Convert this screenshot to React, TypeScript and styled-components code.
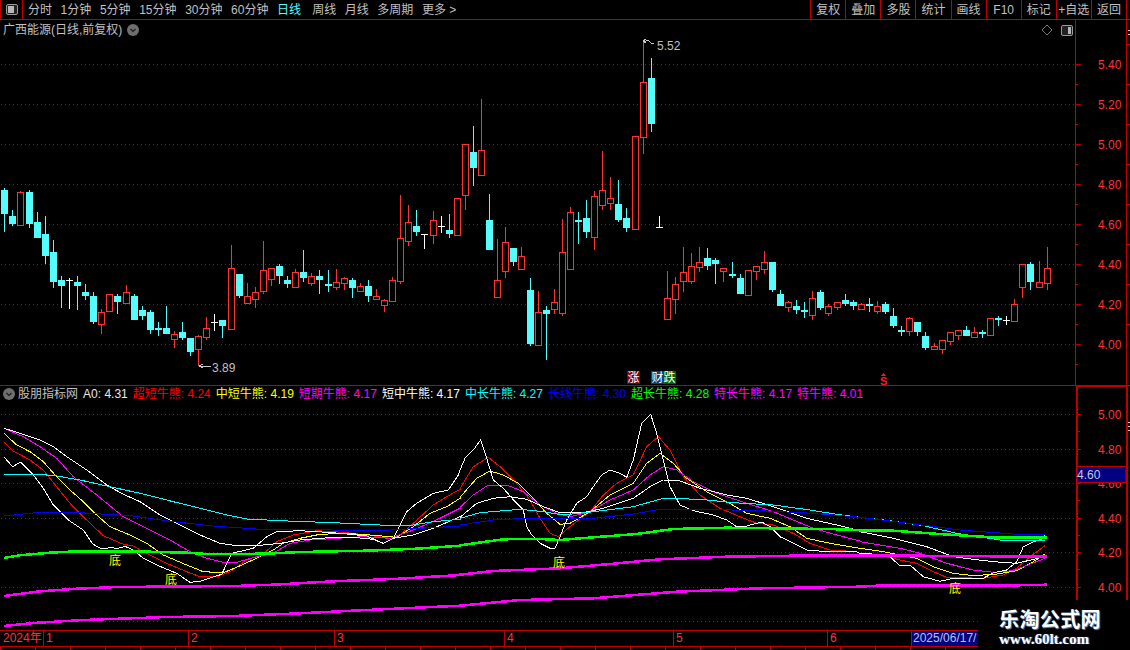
import styled, { createGlobalStyle } from 'styled-components';

const RED = '#ff3232';
const LINE = '#c00000';
const DOT = '#c00000';
const FONT = '"Liberation Sans", "Noto Sans CJK SC", sans-serif';

const TABS = ['分时', '1分钟', '5分钟', '15分钟', '30分钟', '60分钟', '日线', '周线', '月线', '多周期', '更多 >'];
const ACTIONS = ['复权', '叠加', '多股', '统计', '画线', 'F10', '标记', '+自选', '返回'];

const LEGEND = [
  { label: 'A0', value: '4.31', color: '#e8e8e8' },
  { label: '超短牛熊', value: '4.24', color: '#ff0000' },
  { label: '中短牛熊', value: '4.19', color: '#ffff00' },
  { label: '短期牛熊', value: '4.17', color: '#ff00ff' },
  { label: '短中牛熊', value: '4.17', color: '#ffffff' },
  { label: '中长牛熊', value: '4.27', color: '#00ffff' },
  { label: '长线牛熊', value: '4.30', color: '#0000ff' },
  { label: '超长牛熊', value: '4.28', color: '#00ff00' },
  { label: '特长牛熊', value: '4.17', color: '#ff00ff' },
  { label: '特牛熊', value: '4.01', color: '#ff00ff' },
];

const MONTHS = [
  { label: '2024年', width: 44 },
  { label: '1', width: 145 },
  { label: '2', width: 146 },
  { label: '3', width: 170 },
  { label: '4', width: 169 },
  { label: '5', width: 154 },
  { label: '6', width: 84 },
];

// high, body top, body bottom, low, kind (page pixels)
type Candle = [number, number, number, number, 'r' | 'c' | 'w'];
const CANDLES: Candle[] = [
  [188, 190, 214, 232, 'c'], [210, 216, 224, 226, 'c'], [191, 192, 225, 226, 'r'], [190, 192, 224, 228, 'c'],
  [212, 222, 238, 238, 'c'], [216, 234, 256, 264, 'c'], [240, 252, 282, 288, 'c'], [276, 280, 286, 308, 'c'],
  [278, 280, 280, 308, 'w'], [276, 282, 286, 310, 'c'], [284, 292, 296, 300, 'c'], [292, 296, 322, 324, 'c'],
  [309, 312, 324, 334, 'r'], [294, 294, 311, 312, 'r'], [294, 296, 302, 314, 'c'], [285, 292, 303, 303, 'r'],
  [294, 296, 320, 320, 'c'], [306, 310, 316, 320, 'c'], [310, 312, 330, 334, 'c'], [322, 328, 330, 336, 'c'],
  [306, 328, 334, 334, 'c'], [331, 334, 339, 348, 'r'], [322, 332, 338, 340, 'c'], [338, 338, 352, 356, 'c'],
  [335, 336, 349, 366, 'r'], [317, 328, 337, 340, 'r'], [314, 322, 322, 330, 'w'], [320, 320, 326, 338, 'c'],
  [245, 268, 329, 330, 'r'], [274, 274, 296, 298, 'c'], [283, 296, 303, 303, 'r'], [287, 292, 299, 308, 'r'],
  [241, 270, 291, 294, 'r'], [268, 268, 279, 286, 'r'], [264, 266, 276, 284, 'c'], [276, 280, 284, 288, 'c'],
  [269, 272, 287, 288, 'r'], [250, 272, 278, 282, 'c'], [273, 276, 283, 286, 'r'], [270, 276, 280, 294, 'c'],
  [270, 284, 286, 292, 'c'], [269, 282, 287, 290, 'r'], [277, 278, 283, 290, 'r'], [278, 280, 288, 298, 'c'],
  [283, 286, 291, 291, 'r'], [280, 286, 296, 302, 'c'], [289, 296, 299, 299, 'r'], [299, 300, 305, 312, 'r'],
  [277, 280, 301, 302, 'r'], [195, 238, 281, 284, 'r'], [205, 222, 241, 246, 'r'], [210, 226, 232, 236, 'c'],
  [234, 234, 234, 248, 'w'], [211, 220, 235, 244, 'r'], [216, 226, 226, 232, 'w'], [214, 230, 234, 238, 'c'],
  [198, 198, 235, 236, 'r'], [144, 144, 195, 210, 'r'], [126, 152, 168, 186, 'c'], [99, 150, 175, 175, 'r'],
  [194, 220, 250, 250, 'c'], [239, 280, 297, 297, 'r'], [227, 242, 271, 278, 'r'], [248, 248, 262, 266, 'c'],
  [247, 256, 269, 270, 'r'], [278, 290, 344, 346, 'c'], [291, 312, 345, 345, 'r'], [306, 310, 314, 360, 'c'],
  [289, 302, 309, 314, 'r'], [219, 252, 313, 316, 'r'], [207, 212, 269, 269, 'r'], [212, 220, 222, 244, 'c'],
  [200, 218, 232, 238, 'c'], [191, 196, 237, 250, 'r'], [151, 190, 205, 210, 'r'], [177, 198, 203, 210, 'r'],
  [180, 204, 220, 222, 'c'], [208, 218, 228, 232, 'c'], [136, 136, 229, 229, 'r'], [40, 82, 137, 154, 'r'],
  [58, 78, 124, 132, 'c'], [216, 227, 227, 227, 'w'], [271, 298, 319, 319, 'r'], [277, 284, 299, 314, 'r'],
  [247, 272, 281, 292, 'r'], [253, 266, 281, 284, 'r'], [247, 262, 267, 272, 'r'], [248, 258, 266, 270, 'c'],
  [258, 260, 264, 284, 'c'], [268, 268, 271, 282, 'r'], [262, 274, 276, 278, 'c'], [274, 278, 294, 294, 'c'],
  [270, 270, 295, 295, 'r'], [266, 266, 271, 280, 'r'], [251, 262, 269, 274, 'r'], [262, 262, 290, 292, 'c'],
  [290, 294, 306, 306, 'c'], [301, 302, 307, 312, 'r'], [300, 306, 310, 314, 'c'], [302, 310, 312, 318, 'c'],
  [291, 298, 315, 320, 'r'], [290, 292, 308, 310, 'c'], [304, 306, 313, 316, 'r'], [302, 302, 307, 310, 'r'],
  [294, 300, 304, 306, 'c'], [300, 302, 306, 310, 'c'], [303, 304, 309, 309, 'r'], [298, 304, 306, 312, 'c'],
  [301, 306, 311, 314, 'r'], [302, 304, 312, 314, 'c'], [308, 316, 326, 328, 'c'], [326, 330, 332, 336, 'c'],
  [317, 318, 331, 336, 'r'], [322, 322, 332, 336, 'c'], [332, 336, 348, 350, 'c'], [343, 346, 349, 350, 'r'],
  [340, 340, 349, 354, 'r'], [332, 332, 341, 345, 'r'], [330, 330, 335, 340, 'r'], [326, 330, 336, 336, 'c'],
  [327, 332, 337, 337, 'r'], [330, 332, 334, 338, 'c'], [318, 318, 335, 335, 'r'], [316, 318, 320, 326, 'c'],
  [316, 320, 320, 324, 'w'], [299, 304, 321, 321, 'r'], [264, 264, 287, 298, 'r'], [262, 264, 282, 290, 'c'],
  [261, 282, 287, 288, 'r'], [247, 268, 283, 290, 'r'],
];

// each trace was read in three stretches, x relative to 0, 460 and 860, scaled 3x
const stretch = (x0: number, points: string) =>
  points
    .split(' ')
    .map(p => {
      const [x, y] = p.split(',').map(Number);
      return `${(x0 + x / 3).toFixed(1)},${(380 + y / 3).toFixed(1)}`;
    })
    .join(' ');

const trace = (a: string, b: string, c: string) =>
  [stretch(0, a), stretch(460, b), stretch(860, c)].join(' ');

const TRACES = [
  {
    color: '#ff0000',
    width: 1,
    points: trace(
      '12,187 40,213 90,240 130,270 170,320 210,370 260,420 310,467 370,493 400,498 430,515 500,550 560,575 600,590 650,590 690,575 740,540 790,522 830,485 880,465 950,452 1030,457 1100,465 1170,475 1200,465 1240,430 1300,375 1340,350 1380,328',
      '0,325 40,260 85,232 120,260 170,310 210,360 240,415 270,460 295,470 330,440 390,395 430,345 470,310 520,285 560,200 595,170 630,210 670,290 720,345 780,385 840,410 890,430 940,435 1000,460 1050,490 1110,510 1190,515',
      '0,520 60,525 120,540 170,550 220,575 260,592 370,595 430,585 470,565 510,530 555,497',
    ),
  },
  {
    color: '#ffff00',
    width: 1,
    points: trace(
      '12,160 50,195 90,215 130,245 170,290 210,330 250,365 290,405 330,440 390,465 440,490 490,525 560,555 610,575 670,578 710,562 780,530 820,510 850,490 900,475 960,463 1040,460 1110,465 1190,472 1240,440 1290,400 1340,380 1380,355',
      '0,352 50,295 90,273 130,285 175,310 215,350 260,400 300,433 330,430 390,395 450,345 520,310 560,250 600,220 640,250 680,295 740,335 800,365 860,400 930,415 990,440 1040,475 1110,490 1200,505',
      '0,505 70,515 120,525 170,535 220,560 280,580 340,587 410,582 470,572 520,545 555,522',
    ),
  },
  {
    color: '#ff00ff',
    width: 1,
    points: trace(
      '12,145 70,170 120,200 170,235 220,290 290,345 370,410 430,440 510,480 570,515 620,535 670,547 710,547 770,530 820,520 870,490 930,480 1010,475 1090,470 1170,475 1240,450 1320,415 1380,385',
      '0,382 40,345 85,315 140,315 190,335 240,375 290,400 330,410 390,395 450,360 520,330 570,285 610,260 650,270 700,305 770,340 860,370 940,395 1000,420 1060,445 1130,465 1200,483',
      '0,485 60,495 120,505 180,520 260,550 340,570 400,577 460,572 555,535',
    ),
  },
  {
    color: '#ffffff',
    width: 1,
    points: trace(
      '12,145 60,160 120,180 160,200 200,230 260,270 320,315 370,343 420,365 480,405 540,435 600,465 660,490 710,497 770,497 840,490 900,480 1000,472 1060,472 1120,478 1150,490 1180,475 1240,465 1300,445 1380,410',
      '0,412 50,370 100,355 150,350 200,358 250,380 300,398 370,398 430,385 520,355 570,320 610,300 660,303 720,325 800,345 860,355 940,380 1040,415 1130,435 1190,450',
      '0,455 100,475 200,500 280,530 340,538 400,545 470,550 555,530',
    ),
  },
  {
    color: '#ffffff',
    width: 1,
    points: trace(
      '12,231 38,260 62,246 100,285 130,325 160,375 205,420 250,450 278,492 305,507 330,503 355,505 375,499 400,510 430,535 470,555 530,580 570,607 600,604 665,583 695,520 760,505 800,470 830,455 900,452 1000,458 1100,468 1150,490 1180,475 1220,395 1250,370 1300,340 1345,330 1375,285',
      '0,270 15,235 40,210 62,180 80,235 100,300 130,325 165,365 190,390 200,440 215,465 240,490 270,505 285,505 300,470 320,420 350,370 380,350 400,320 425,285 450,270 480,280 500,292 520,240 545,130 572,103 590,160 610,240 630,320 660,375 700,392 760,405 800,420 830,440 860,438 905,426 930,440 960,470 1000,490 1040,510 1100,515 1190,515',
      '0,520 85,525 120,558 150,555 190,590 240,604 280,595 370,595 400,578 440,570 470,545 490,500 520,485 545,478 555,465',
    ),
  },
  {
    color: '#00ffff',
    width: 1,
    points: trace(
      '12,284 130,284 170,288 240,300 330,320 420,340 520,365 600,385 680,405 740,417 840,422 1000,428 1140,435 1240,435 1300,425 1380,418',
      '0,415 60,398 130,392 180,388 250,395 310,405 400,395 520,380 610,355 720,358 820,368 940,375 1050,390 1130,403 1200,412',
      '0,412 90,422 190,437 290,460 420,480 490,482 555,480',
    ),
  },
  {
    color: '#0000ff',
    width: 1,
    points: trace(
      '12,408 70,402 120,397 240,398 400,408 520,425 640,438 780,448 1000,450 1140,452 1260,445 1380,438',
      '0,435 100,420 200,415 400,415 520,402 600,388 730,388 900,392 1060,400 1200,412',
      '0,412 130,428 300,450 470,463 555,464',
    ),
  },
  {
    color: '#00ff00',
    width: 2.5,
    points: trace(
      '12,534 60,526 150,518 230,514 400,514 560,518 620,522 800,521 900,516 1100,512 1250,506 1380,497',
      '0,496 130,478 240,477 300,480 400,472 530,462 640,447 800,443 1100,447 1200,450',
      '0,452 100,452 250,463 420,473 560,473',
    ),
  },
  {
    color: '#ff00ff',
    width: 2.5,
    points: trace(
      '12,648 120,634 230,626 350,621 700,618 820,614 1000,604 1200,596 1380,585',
      '0,584 100,573 300,565 450,552 600,538 800,530 1000,527 1200,527',
      '0,527 170,527 560,530',
    ),
  },
  {
    color: '#ff00ff',
    width: 2.5,
    points: trace(
      '12,738 100,729 250,720 500,711 700,708 900,700 1100,690 1380,677',
      '0,677 180,660 400,655 650,635 900,625 1200,620',
      '0,620 50,617 420,617 560,614',
    ),
  },
];

const PRICE_GRID = [5.4, 5.2, 5.0, 4.8, 4.6, 4.4, 4.2, 4.0].map(p => ({
  label: p.toFixed(2),
  y: Math.round(344 + (4 - p) * 200),
}));
const INDICATOR_GRID = [5.0, 4.8, 4.6, 4.4, 4.2, 4.0].map(p => ({
  label: p.toFixed(2),
  y: Math.round(587 - (p - 4) * 173),
}));
const BOTTOM_MARKS = [
  { x: 109, y: 561 },
  { x: 165, y: 580 },
  { x: 553, y: 563 },
  { x: 949, y: 589 },
];

function Candles() {
  return (
    <g shapeRendering='crispEdges'>
      {CANDLES.map(([high, top, bottom, low, kind], i) => {
        const x = Math.round(4.3 + 8.08 * i);
        if (kind === 'w') {
          return (
            <g key={i} fill='#fff'>
              <rect x={x} y={high} width={1} height={low - high + 1} />
              <rect x={x - 3} y={top} width={7} height={1} />
            </g>
          );
        }
        const fill = kind === 'r' ? RED : '#54fcfc';
        return (
          <g key={i} fill={fill}>
            <rect x={x} y={high} width={1} height={Math.max(top - high, 0)} />
            <rect x={x} y={bottom} width={1} height={Math.max(low - bottom, 0)} />
            {kind === 'r' ? (
              <rect
                x={x - 2.5}
                y={top + 0.5}
                width={6}
                height={bottom - top}
                fill='#000'
                stroke={RED}
                strokeWidth={1}
              />
            ) : (
              <rect x={x - 3} y={top} width={7} height={bottom - top} />
            )}
          </g>
        );
      })}
    </g>
  );
}

function GridLines({ rows, right }: { rows: { y: number }[]; right: number }) {
  return (
    <g stroke={DOT} strokeDasharray='1 3' shapeRendering='crispEdges'>
      {rows.map(row => (
        <line key={row.y} x1={1} x2={right} y1={row.y + 0.5} y2={row.y + 0.5} />
      ))}
    </g>
  );
}

function Badge({ x, bg, children }: { x: number; bg: string; children: string }) {
  return (
    <g>
      <rect x={x} y={371} width={13} height={13} fill={bg} />
      <text x={x + 0.5} y={382} fill='#fff' fontSize={12}>
        {children}
      </text>
    </g>
  );
}

function PriceChart() {
  return (
    <ChartSvg width={1075} height={365} viewBox='0 20 1075 365'>
      <GridLines rows={PRICE_GRID} right={1075} />
      <Candles />
      <path
        d='M643 41 l3 -2 M643 41 l3 2 M643 41 h3 q2 -1 4 1 t4 2'
        fill='none'
        stroke='#c8c8c8'
        shapeRendering='crispEdges'
      />
      <text x={657} y={50} fill='#c0c0c0' fontSize={12}>
        5.52
      </text>
      <path
        d='M199 366 h12 M199 366 l4 -2 M199 366 l4 2'
        fill='none'
        stroke='#c8c8c8'
        shapeRendering='crispEdges'
      />
      <text x={212} y={372} fill='#c0c0c0' fontSize={12}>
        3.89
      </text>
      <Badge x={627} bg='#800000'>
        涨
      </Badge>
      <Badge x={651} bg='#0a3f78'>
        财
      </Badge>
      <Badge x={663} bg='#006400'>
        跌
      </Badge>
      <path d='M883.5 373 L886 376 L881 376 Z' fill='#ff1a1a' />
      <text x={880} y={384.5} fill='#ff1a1a' fontSize={11} fontWeight={700}>
        S
      </text>
    </ChartSvg>
  );
}

function IndicatorChart() {
  return (
    <ChartSvg width={1076} height={244} viewBox='0 386 1076 244'>
      <GridLines rows={[...INDICATOR_GRID, { y: 621 }]} right={1076} />
      <g fill='none' shapeRendering='crispEdges'>
        {TRACES.map((line, i) => (
          <polyline key={i} points={line.points} stroke={line.color} strokeWidth={line.width} />
        ))}
      </g>
      {BOTTOM_MARKS.map(mark => (
        <text key={mark.x} x={mark.x} y={mark.y + 4} fill='#ffff00' fontSize={12}>
          底
        </text>
      ))}
    </ChartSvg>
  );
}

function PriceAxis() {
  return (
    <ChartSvg width={55} height={365} viewBox='1075 20 55 365'>
      <g stroke={LINE} shapeRendering='crispEdges'>
        <line x1={1075.5} x2={1075.5} y1={20} y2={385} />
        <line x1={1126.5} x2={1126.5} y1={20} y2={385} />
        {PRICE_GRID.map(row => (
          <g key={row.y}>
            <line x1={1075} x2={1081} y1={row.y + 0.5} y2={row.y + 0.5} />
            <line x1={1075} x2={1078} y1={row.y + 20.5} y2={row.y + 20.5} />
            <line x1={1127} x2={1130} y1={row.y - 19.5} y2={row.y - 19.5} />
          </g>
        ))}
      </g>
      <rect x={1128} y={30} width={2} height={1} fill='#c8c8c8' />
      <rect x={1128} y={34} width={2} height={1} fill='#c8c8c8' />
      {PRICE_GRID.map(row => (
        <text key={row.y} x={1098} y={row.y + 5} fill={RED} fontSize={12}>
          {row.label}
        </text>
      ))}
    </ChartSvg>
  );
}

function IndicatorAxis() {
  return (
    <ChartSvg width={54} height={244} viewBox='1076 386 54 244'>
      <g stroke={LINE} shapeRendering='crispEdges'>
        <rect x={1076} y={386} width={52} height={1} fill={LINE} stroke='none' />
        <rect x={1076} y={386} width={2} height={214} fill={LINE} stroke='none' />
        <rect x={1126} y={386} width={2} height={214} fill={LINE} stroke='none' />
        {INDICATOR_GRID.map(row => (
          <g key={row.y}>
            <line x1={1078} x2={1081} y1={row.y + 0.5} y2={row.y + 0.5} />
            <line x1={1078} x2={1080} y1={row.y + 17.5} y2={row.y + 17.5} />
          </g>
        ))}
      </g>
      <rect x={1128} y={422} width={2} height={1} fill='#c8c8c8' />
      <rect x={1128} y={426} width={2} height={1} fill='#c8c8c8' />
      <rect x={1128} y={430} width={2} height={1} fill='#c8c8c8' />
      {INDICATOR_GRID.map(row => (
        <text key={row.y} x={1098} y={row.y + 5} fill={RED} fontSize={12}>
          {row.label}
        </text>
      ))}
      <rect x={1077} y={466.5} width={49} height={16} fill='#000080' stroke={LINE} />
      <text x={1077} y={479} fill='#c8c8e0' fontSize={12}>
        4.60
      </text>
    </ChartSvg>
  );
}

function PanelChevron() {
  return (
    <svg width={12} height={12} viewBox='0 0 12 12'>
      <circle cx={6} cy={6} r={6} fill='#6e6e6e' />
      <path d='M3.5 5 L6 7.5 L8.5 5' fill='none' stroke='#1c1c1c' strokeWidth={1.2} />
    </svg>
  );
}

function LayoutIcon({ fillRight }: { fillRight?: boolean }) {
  return (
    <svg width={12} height={11} viewBox='0 0 12 11'>
      <rect x={0.5} y={0.5} width={11} height={10} rx={1.5} fill='#222' stroke='#9a9a9a' />
      <rect x={fillRight ? 7 : 2} y={2} width={fillRight ? 3 : 6} height={7} fill='#b8b8b8' />
    </svg>
  );
}

export default function App() {
  return (
    <Page>
      <GlobalStyle />
      <Toolbar>
        <IconCell>
          <LayoutIcon />
        </IconCell>
        <Tabs>
          {TABS.map(tab => (
            <Tab key={tab} $active={tab === '日线'}>
              {tab}
            </Tab>
          ))}
        </Tabs>
        <Actions>
          {ACTIONS.map(action => (
            <Action key={action}>{action}</Action>
          ))}
        </Actions>
      </Toolbar>

      <PricePanel>
        <PanelHead>
          <span>广西能源(日线,前复权)</span>
          <PanelChevron />
        </PanelHead>
        <PanelTools>
          <svg width={12} height={12} viewBox='0 0 12 12'>
            <path d='M6 1 L11 6 L6 11 L1 6 Z' fill='none' stroke='#777' />
          </svg>
          <LayoutIcon fillRight />
        </PanelTools>
        <PriceChart />
        <PriceAxis />
      </PricePanel>

      <IndicatorPanel>
        <Legend>
          <LegendName>
            <PanelChevron />
            <span>股朋指标网</span>
          </LegendName>
          {LEGEND.map(item => (
            <LegendItem key={item.label} $color={item.color}>
              {item.label}: {item.value}
            </LegendItem>
          ))}
        </Legend>
        <IndicatorChart />
        <IndicatorAxis />
      </IndicatorPanel>

      <TimeAxis>
        {MONTHS.map(month => (
          <Month key={month.label} $width={month.width}>
            {month.label}
          </Month>
        ))}
        <DateBox>2025/06/17/</DateBox>
      </TimeAxis>
      <AxisTail />

      <Watermark>
        <WatermarkTitle>乐淘公式网</WatermarkTitle>
        <WatermarkUrl>www.60lt.com</WatermarkUrl>
      </Watermark>
    </Page>
  );
}

const GlobalStyle = createGlobalStyle`
  html, body {
    margin: 0;
    background: #000;
  }
`;

const Page = styled.div`
  position: relative;
  width: 1130px;
  height: 650px;
  overflow: hidden;
  background: #000;
  color: #c0c0c0;
  font-family: ${FONT};
  font-size: 12px;
  line-height: 14px;
`;

const Toolbar = styled.div`
  display: flex;
  align-items: stretch;
  height: 19px;
  border-bottom: 1px solid ${LINE};
`;

const IconCell = styled.div`
  display: flex;
  align-items: center;
  justify-content: center;
  width: 23px;
  box-sizing: border-box;
  border-left: 1px solid ${LINE};
  border-right: 1px solid ${LINE};
`;

const Tabs = styled.div`
  display: flex;
  align-items: center;
  gap: 8.6px;
  padding-left: 5px;
`;

const Tab = styled.span<{ $active?: boolean }>`
  color: ${props => (props.$active ? '#54fcfc' : '#c0c0c0')};
  margin-right: ${props => (props.$active ? '2.5px' : '0')};
`;

const Actions = styled.div`
  display: flex;
  margin-left: auto;
  margin-right: 3px;
  border-right: 1px solid ${LINE};
`;

const Action = styled.div`
  display: flex;
  align-items: center;
  justify-content: center;
  width: 35.1px;
  box-sizing: border-box;
  border-left: 1px solid ${LINE};
`;

const ChartSvg = styled.svg`
  display: block;
  flex: none;
  font-family: ${FONT};
`;

const PricePanel = styled.div`
  position: relative;
  display: flex;
  height: 365px;
`;

const PanelHead = styled.div`
  position: absolute;
  top: 3px;
  left: 3px;
  display: flex;
  align-items: center;
  gap: 5px;
`;

const PanelTools = styled.div`
  position: absolute;
  top: 4px;
  left: 1041px;
  display: flex;
  align-items: center;
  gap: 8px;
`;

const IndicatorPanel = styled.div`
  position: relative;
  display: flex;
  height: 244px;
  border-top: 1px solid ${LINE};
`;

const Legend = styled.div`
  position: absolute;
  top: 1px;
  left: 3px;
  display: flex;
  align-items: center;
  gap: 5px;
  white-space: nowrap;
`;

const LegendName = styled.div`
  display: flex;
  align-items: center;
  gap: 3px;
`;

const LegendItem = styled.span<{ $color: string }>`
  color: ${props => props.$color};
`;

const TimeAxis = styled.div`
  display: flex;
  width: 978px;
  height: 15px;
  border-top: 1px solid ${LINE};
  border-bottom: 1px solid ${LINE};
  background: repeating-linear-gradient(90deg, ${LINE} 0 1px, transparent 1px 36.5px) 6px 0 / 100% 3px
    no-repeat;
`;

const Month = styled.div<{ $width: number }>`
  flex: none;
  width: ${props => props.$width}px;
  box-sizing: border-box;
  padding-left: 2px;
  color: ${RED};
  border-right: 1px solid ${LINE};
  white-space: nowrap;
  background: #000;
  &:first-child {
    padding-left: 3px;
  }
`;

const DateBox = styled.div`
  flex: 1;
  background: #000080;
  color: #b8c4e8;
  white-space: nowrap;
  overflow: hidden;
  padding-left: 1px;
`;

const AxisTail = styled.div`
  height: 3px;
  width: 978px;
  background: repeating-linear-gradient(90deg, ${LINE} 0 1px, transparent 1px 35px);
`;

const Watermark = styled.div`
  position: absolute;
  right: 0;
  bottom: 0;
  width: 152px;
  height: 50px;
  padding-left: 21px;
  box-sizing: border-box;
  background: #000;
  color: #fff;
`;

const WatermarkTitle = styled.div`
  margin-top: 8px;
  font-family: "Noto Sans CJK SC", sans-serif;
  font-size: 20px;
  font-weight: 700;
  line-height: 21px;
  letter-spacing: 0.4px;
  text-shadow: 1px 1px 1px #6a86b0;
`;

const WatermarkUrl = styled.div`
  margin-top: 3px;
  font-family: "Liberation Serif", serif;
  font-size: 15px;
  font-weight: 700;
  line-height: 15px;
  text-shadow: 1px 0 1px #6a86b0;
`;
